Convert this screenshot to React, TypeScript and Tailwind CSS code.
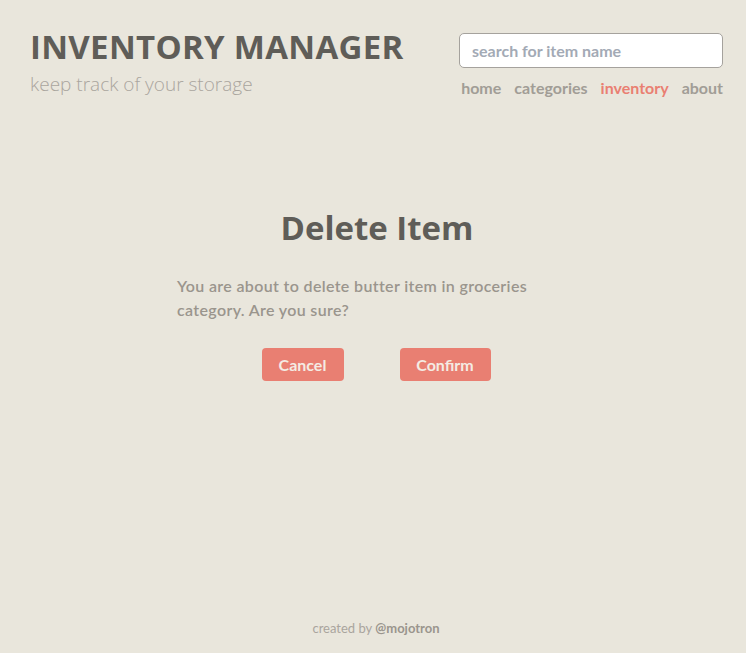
import React from 'react';

const NAV = ['home', 'categories', 'inventory', 'about'];

export default function App() {
  return (
    <div className="min-h-[653px] bg-[#e9e6dc] flex flex-col font-['Lato','Open_Sans',sans-serif]">
      {/* Header */}
      <header className="flex justify-between pl-[30px] pr-[23px] pt-[27px]">
        <div>
          <h1 className="font-['Open_Sans',sans-serif] font-bold text-[33px] leading-[40px] text-[#5f5d58] tracking-[0.3px]">
            INVENTORY MANAGER
          </h1>
          <p className="mt-[3px] text-[19px] font-light text-[#a9a59e] font-['Open_Sans',sans-serif]">keep track of your storage</p>
        </div>
        <div className="flex flex-col items-end pt-[6px]">
          <input
            className="w-[264px] h-[35px] bg-white rounded-[5px] border border-[#a5a29d] px-[12px] text-[16px] font-bold text-[#a3aab5] placeholder:text-[#a3aab5] outline-none"
            placeholder="search for item name"
          />
          <nav className="flex gap-[13px] mt-[8px] text-[16px] font-bold">
            {NAV.map(n => (
              <a key={n} className={n === 'inventory' ? 'text-[#e97f72]' : 'text-[#a19d96]'}>{n}</a>
            ))}
          </nav>
        </div>
      </header>

      {/* Delete dialog */}
      <main className="flex-1 flex flex-col items-center pt-[107px]">
        <h2 className="ml-[8px] font-['Open_Sans',sans-serif] font-bold text-[33px] leading-[42px] text-[#5f5d58]">Delete Item</h2>
        <p className="w-[392px] pr-[20px] mt-[25px] text-[16px] leading-[24px] font-semibold text-[#9a958d] tracking-[0.35px]">
          You are about to delete butter item in groceries category. Are you sure?
        </p>
        <div className="flex gap-[56px] mt-[26px] ml-[6px]">
          <button className="w-[82px] h-[33px] rounded-[4px] bg-[#e97f72] text-[#f4ebe3] text-[16px] font-bold">Cancel</button>
          <button className="w-[91px] h-[33px] rounded-[4px] bg-[#e97f72] text-[#f4ebe3] text-[16px] font-bold">Confirm</button>
        </div>
      </main>

      <footer className="pb-[15px] pl-[6px] text-center text-[13px] text-[#a9a59e]">
        created by <span className="font-bold text-[#9a958d]">@mojotron</span>
      </footer>
    </div>
  );
}
